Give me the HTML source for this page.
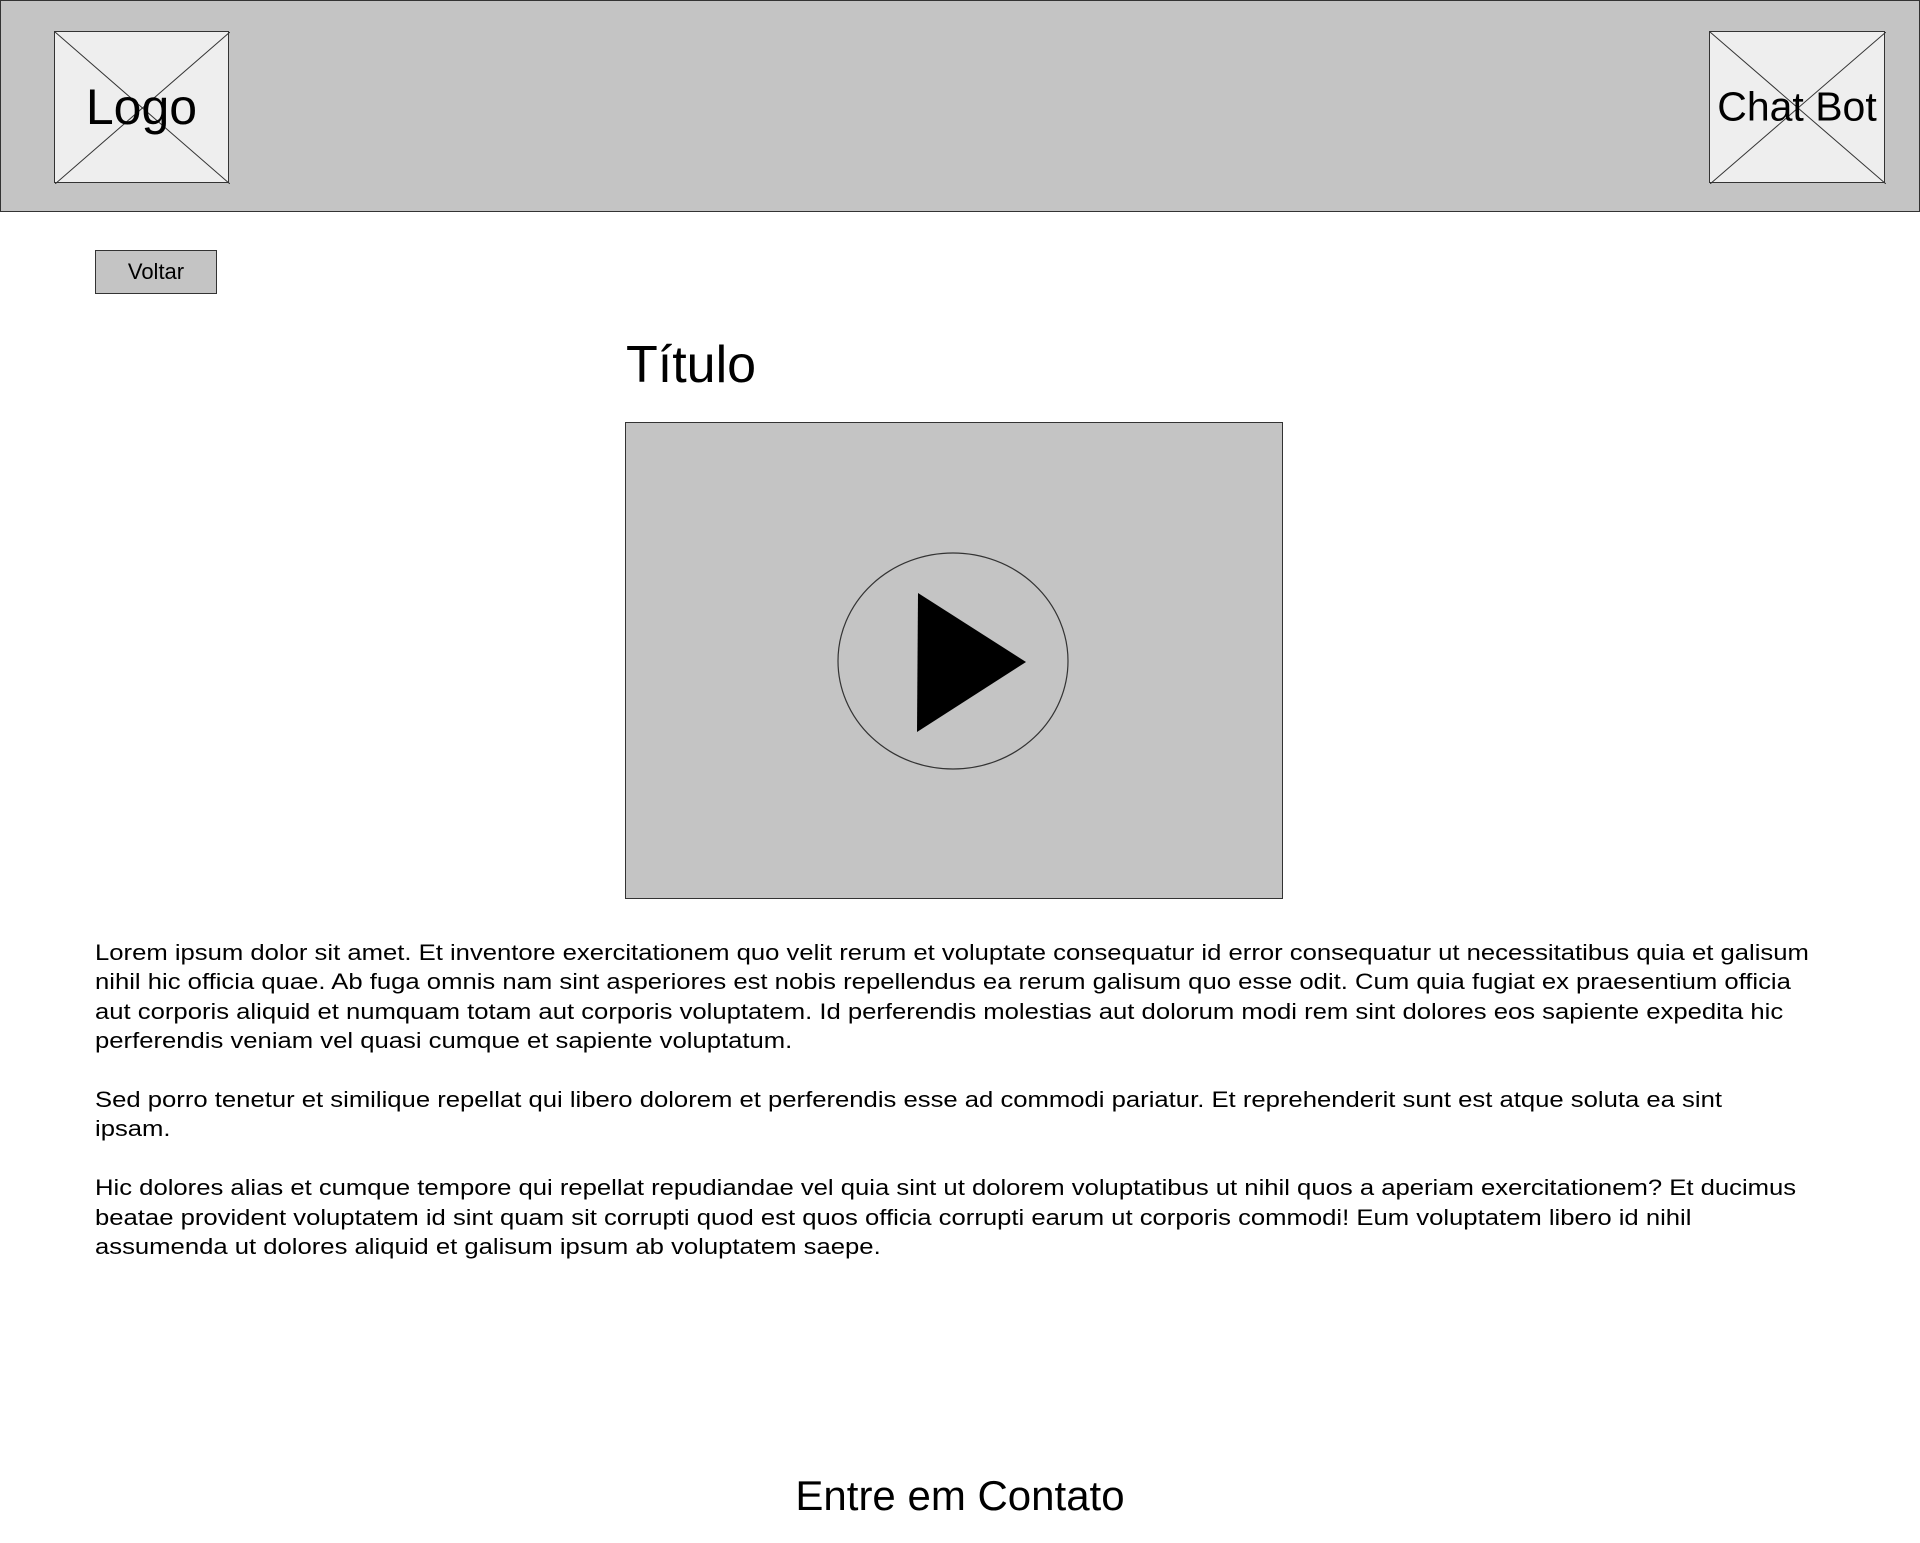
<!DOCTYPE html>
<html><head><meta charset="utf-8"><style>
*{margin:0;padding:0;box-sizing:border-box}
body{width:1920px;height:1543px;background:#fff;font-family:"Liberation Sans",sans-serif;color:#000;position:relative;overflow:hidden}
.abs{position:absolute}
.hdr{left:0;top:0;width:1920px;height:212px;background:#c4c4c4;border:1px solid #333}
.ph{background:#eee;border:1px solid #333}
.ph svg{position:absolute;left:0;top:0}
.ph span{position:absolute;left:0;right:0;top:50%;transform:translateY(-50%);text-align:center;white-space:nowrap}
p{font-size:22px;line-height:29.4px;white-space:nowrap}
</style></head><body>
<div class="abs hdr"></div>
<div class="abs ph" style="left:54px;top:31px;width:175px;height:152px">
<svg width="175" height="152"><line x1="0" y1="0" x2="175" y2="152" stroke="#333"/><line x1="175" y1="0" x2="0" y2="152" stroke="#333"/></svg>
<span style="font-size:50px">Logo</span></div>
<div class="abs ph" style="left:1709px;top:31px;width:176px;height:152px">
<svg width="176" height="152"><line x1="0" y1="0" x2="176" y2="152" stroke="#333"/><line x1="176" y1="0" x2="0" y2="152" stroke="#333"/></svg>
<span style="font-size:41px">Chat Bot</span></div>
<div class="abs" style="left:95px;top:250px;width:122px;height:44px;background:#c4c4c4;border:1px solid #333;font-size:22px;text-align:center;line-height:42px">Voltar</div>
<div class="abs" style="left:626px;top:335px;font-size:52px;line-height:60px">Título</div>
<div class="abs" style="left:625px;top:422px;width:658px;height:477px;background:#c4c4c4;border:1px solid #333">
<svg width="658" height="477" class="abs" style="left:-1px;top:-1px"><ellipse cx="328" cy="239" rx="115" ry="108" fill="none" stroke="#333" stroke-width="1.2"/><polygon points="293,171 401,240 292,310" fill="#000"/></svg></div>
<div class="abs" style="left:95px;top:938px;transform:scaleX(1.166);transform-origin:0 0">
<p>Lorem ipsum dolor sit amet. Et inventore exercitationem quo velit rerum et voluptate consequatur id error consequatur ut necessitatibus quia et galisum<br>nihil hic officia quae. Ab fuga omnis nam sint asperiores est nobis repellendus ea rerum galisum quo esse odit. Cum quia fugiat ex praesentium officia<br>aut corporis aliquid et numquam totam aut corporis voluptatem. Id perferendis molestias aut dolorum modi rem sint dolores eos sapiente expedita hic<br>perferendis veniam vel quasi cumque et sapiente voluptatum.</p>
<p style="margin-top:29.4px">Sed porro tenetur et similique repellat qui libero dolorem et perferendis esse ad commodi pariatur. Et reprehenderit sunt est atque soluta ea sint<br>ipsam.</p>
<p style="margin-top:29.4px">Hic dolores alias et cumque tempore qui repellat repudiandae vel quia sint ut dolorem voluptatibus ut nihil quos a aperiam exercitationem? Et ducimus<br>beatae provident voluptatem id sint quam sit corrupti quod est quos officia corrupti earum ut corporis commodi! Eum voluptatem libero id nihil<br>assumenda ut dolores aliquid et galisum ipsum ab voluptatem saepe.</p>
</div>
<div class="abs" style="left:0;width:1920px;top:1470px;text-align:center;font-size:42px;line-height:52px">Entre em Contato</div>
</body></html>
